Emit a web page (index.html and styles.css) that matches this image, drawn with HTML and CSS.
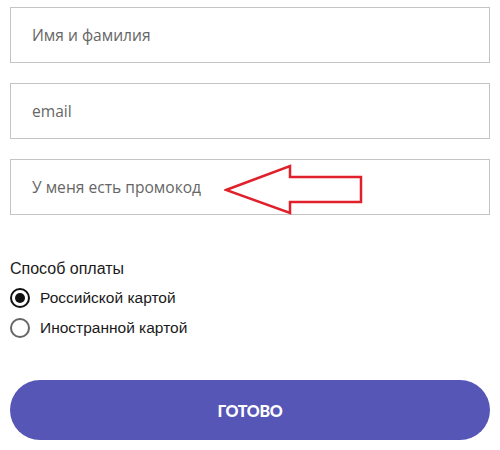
FILE: index.html
```html
<!DOCTYPE html>
<html lang="ru">
<head>
<meta charset="utf-8">
<link rel="stylesheet" href="styles.css">
</head>
<body>
<form class="form">
  <div class="field"><input class="input" type="text" placeholder="Имя и фамилия"></div>
  <div class="field"><input class="input" type="email" placeholder="email"></div>
  <div class="field promo">
    <input class="input" type="text" placeholder="У меня есть промокод">
    <svg class="arrow" width="145" height="52" viewBox="0 0 145 52">
      <polygon points="2,26 66,2 66,13 137,13 137,38 66,38 66,49" fill="none" stroke="#e0202a" stroke-width="2.5" stroke-linejoin="miter"/>
    </svg>
  </div>
  <div class="payment">
    <div class="pay-title">Способ оплаты</div>
    <label class="radio-row"><span class="radio checked"></span>Российской картой</label>
    <label class="radio-row"><span class="radio"></span>Иностранной картой</label>
  </div>
  <button class="submit" type="button">ГОТОВО</button>
</form>
</body>
</html>
```

FILE: styles.css
```css
* { box-sizing: border-box; }
html, body { margin: 0; padding: 0; background: #fff; }
body { width: 500px; height: 450px; overflow: hidden; }
.form {
  padding: 7px 10px 0 10px;
  display: flex;
  flex-direction: column;
}
.field { position: relative; margin-bottom: 20px; }
.field.promo { margin-bottom: 0; }
.input {
  display: block;
  width: 480px;
  height: 56px;
  border: 1px solid #c4c4c4;
  border-radius: 0;
  padding: 0 0 0 21px;
  font-family: "Open Sans", sans-serif;
  font-size: 15.6px;
  color: #555;
  outline: none;
  background: #fff;
}
.input::placeholder { color: #666; opacity: 1; }
.arrow {
  position: absolute;
  left: 214px;
  top: 5px;
}
.payment {
  padding-top: 44px;
  font-family: "Liberation Sans", Arial, sans-serif;
  color: #1a1a1a;
}
.pay-title {
  font-size: 16px;
  line-height: 20px;
  margin-bottom: 4px;
}
.radio-row {
  display: flex;
  align-items: center;
  height: 30px;
  font-size: 15.5px;
  gap: 10px;
}
.radio {
  width: 20px;
  height: 20px;
  border-radius: 50%;
  border: 2px solid #666;
  display: inline-flex;
  align-items: center;
  justify-content: center;
  flex: none;
}
.radio.checked { border-color: #111; }
.radio.checked::after {
  content: "";
  width: 10px;
  height: 10px;
  border-radius: 50%;
  background: #111;
}
.submit {
  margin-top: 37px;
  width: 480px;
  height: 60px;
  border: none;
  border-radius: 30px;
  background: #5656b7;
  color: #fff;
  font-family: "Lato", sans-serif;
  font-weight: 900;
  font-size: 16px;
  letter-spacing: -0.3px;
  cursor: pointer;
}
```
